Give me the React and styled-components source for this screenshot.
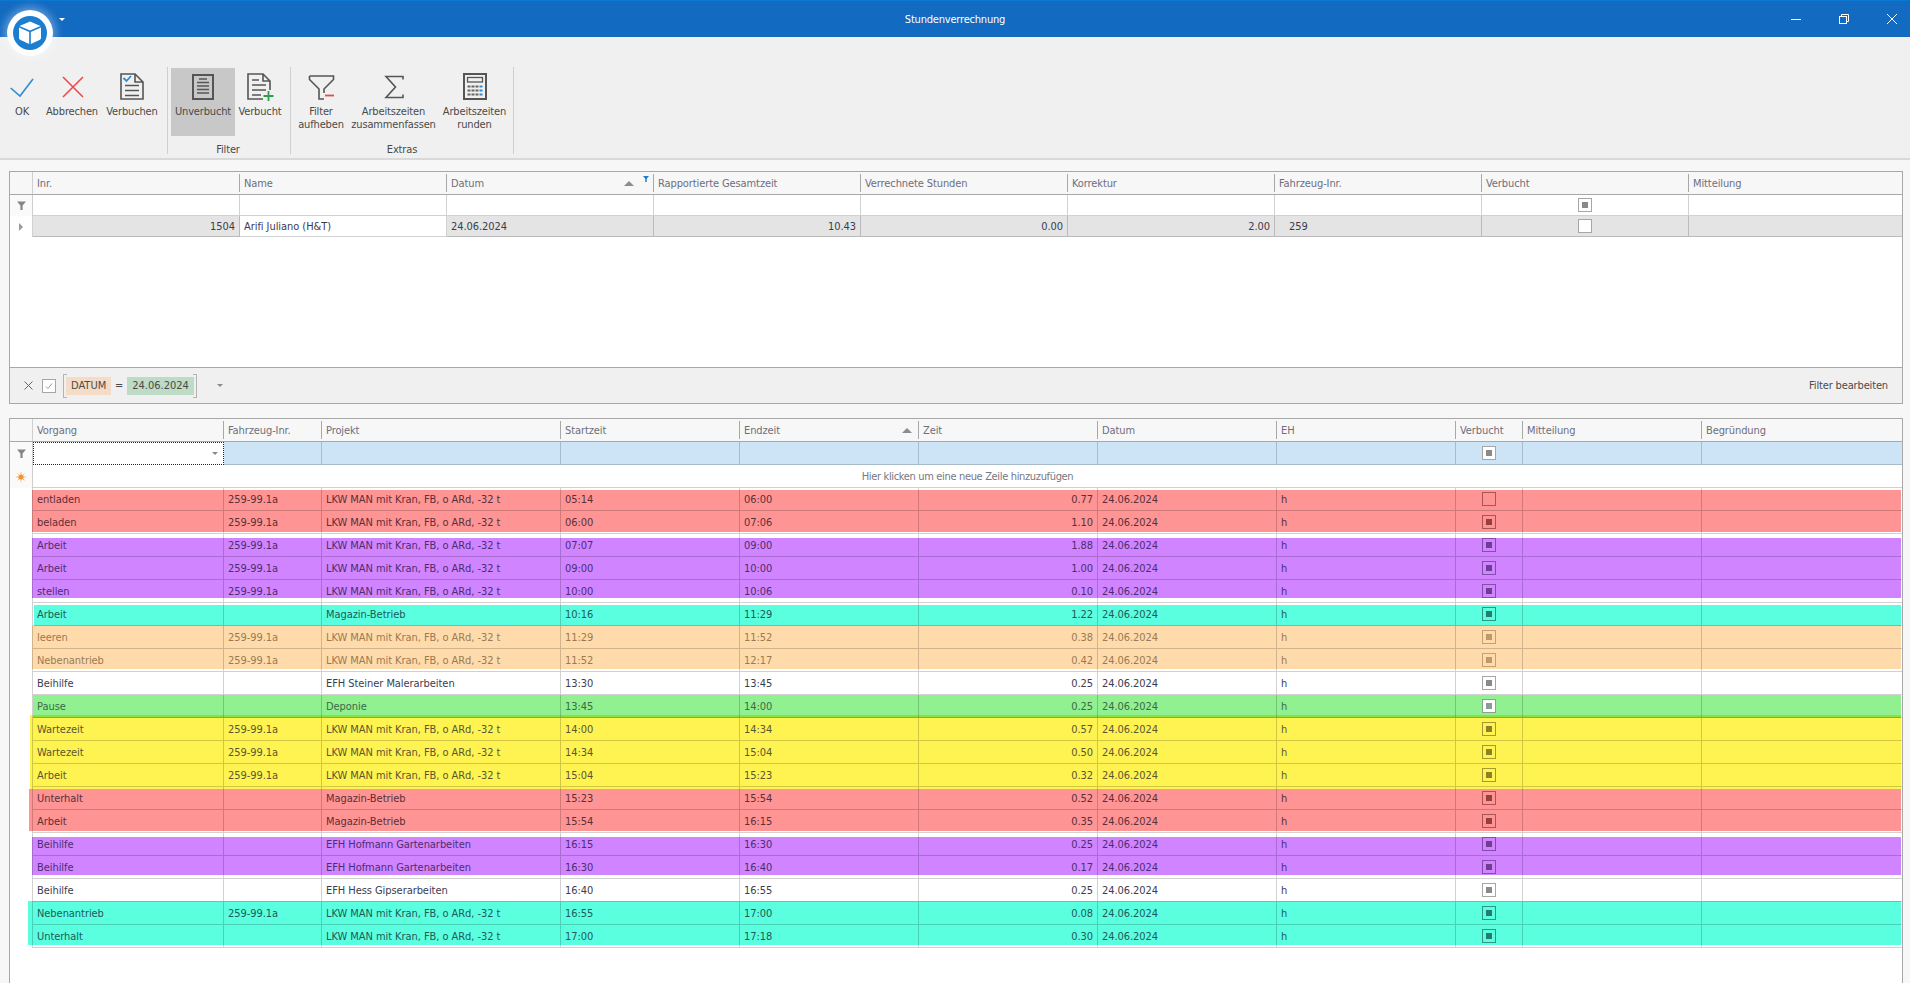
import styled, { createGlobalStyle } from 'styled-components';

const UI_FONT = `"DejaVu Sans Condensed", "DejaVu Sans", "Noto Sans", sans-serif`;
const TOP_COLS = '23px repeat(8, 207px) 1fr';
const LOW_COLS = '23px 191px 98px 239px repeat(5, 179px) 67px 179px 1fr';

const Global = createGlobalStyle`
    html, body {
        margin: 0;
        height: 100%;
        overflow: hidden;
    }
    body {
        background: #f7f7f7;
        font-family: ${UI_FONT};
        font-size: 11px;
        font-stretch: condensed;
        letter-spacing: -0.06px;
    }
`;

const Page = styled.div`
    display: flex;
    flex-direction: column;
    height: 100vh;
    position: relative;
`;

const TitleBar = styled.header`
    display: grid;
    grid-template-columns: 1fr auto 1fr;
    align-items: center;
    height: 37px;
    box-sizing: border-box;
    flex: none;
    background: #126ac1;
    border-top: 1px solid #0a78d2;
    color: #fff;
`;

const Title = styled.div`
    font-size: 11px;
    letter-spacing: -0.2px;
    grid-column: 2;
`;

const WindowButtons = styled.div`
    grid-column: 3;
    display: flex;
    justify-content: flex-end;
    gap: 20px;
    padding-right: 4px;
`;

const WindowButton = styled.span`
    display: flex;
    justify-content: center;
    width: 28px;
`;

const LogoBadge = styled.div`
    position: absolute;
    left: 7px;
    top: 10px;
    width: 46px;
    height: 46px;
    border-radius: 50%;
    box-shadow: 0 0 8px 3px rgba(255, 255, 255, 0.35);
`;

const QuickArrow = styled.div`
    position: absolute;
    left: 59px;
    top: 18px;
    border: 3px solid transparent;
    border-top: 3px solid #fff;
`;

const Ribbon = styled.section`
    display: flex;
    flex: none;
    height: 123px;
    box-sizing: border-box;
    padding: 30px 0 0 6px;
    background: #f0f0f0;
    border-bottom: 2px solid #d9d9d9;
    color: #4a4a4a;
    letter-spacing: -0.15px;
`;

const RibbonGroup = styled.div`
    display: flex;
    flex-direction: column;
    height: 87px;
    box-sizing: border-box;
    padding: 1px ${p => p.$right}px 0 ${p => p.$left}px;
    border-right: 1px solid #cfcfcf;
`;

const RibbonButtons = styled.div`
    display: flex;
`;

const RibbonButton = styled.div`
    display: flex;
    flex-direction: column;
    align-items: center;
    width: ${p => p.$width}px;
    height: 68px;
    padding-top: 3px;
    box-sizing: border-box;
    text-align: center;
    line-height: 13px;
    white-space: pre-line;
    background: ${p => (p.$active ? '#c8c8c8' : 'transparent')};
    svg {
        flex: none;
        margin-bottom: 2px;
    }
`;

const GroupLabel = styled.div`
    margin-top: 7px;
    line-height: 14px;
    height: 14px;
    text-align: center;
`;

const Frame = styled.section`
    display: flex;
    flex-direction: column;
    margin: ${p => p.$top}px 7px 0 9px;
    background: #fff;
    border: 1px solid #a8a8a8;
    box-sizing: border-box;
    ${p => (p.$height ? `height: ${p.$height}px; flex: none;` : 'flex: 1; border-bottom: none; overflow: hidden;')}
`;

const GridRow = styled.div`
    display: grid;
    flex: none;
    grid-template-columns: ${p => p.$cols};
    height: ${p => p.$height || 23}px;
    color: ${p => p.$color || '#3c3c50'};
    background: ${p => p.$background || 'transparent'};
`;

const HeaderRow = styled(GridRow)`
    background: #f7f7f7;
    border-bottom: 1px solid #a8a8a8;
    box-sizing: border-box;
`;

const HeaderCell = styled.div`
    display: flex;
    align-items: center;
    gap: ${p => p.$gap || 0}px;
    min-width: 0;
    margin: 2px 0;
    padding: 0 ${p => p.$padRight || 0}px 0 4px;
    color: #6e6e7c;
    letter-spacing: -0.1px;
    border-right: 1px solid #a8a8a8;
    &:first-child {
        border-right-color: #cfcfcf;
        margin: 0;
    }
    &:last-child {
        border-right: none;
    }
`;

const HeaderLabel = styled.span`
    flex: 1;
`;

const SortArrow = styled.i`
    flex: none;
    width: 0;
    height: 0;
    border: 5px solid transparent;
    border-top: none;
    border-bottom: 5px solid #8c8c8c;
`;

const FilteredMark = styled.svg`
    flex: none;
    align-self: flex-start;
    margin-top: 2px;
`;

const Cell = styled.div`
    display: flex;
    align-items: center;
    justify-content: ${p => p.$justify || 'flex-start'};
    min-width: 0;
    padding: 0 4px 0 ${p => p.$indent || 4}px;
    white-space: nowrap;
    box-sizing: border-box;
    background: ${p => p.$background || 'transparent'};
    border-right: 1px solid rgba(0, 0, 0, 0.18);
    border-bottom: 1px solid rgba(0, 0, 0, 0.18);
    &:last-child {
        border-right: none;
    }
`;

const IndicatorCell = styled.div`
    display: flex;
    align-items: center;
    justify-content: center;
    background: ${p => p.$background || 'transparent'};
    border-right: 1px solid rgba(0, 0, 0, 0.18);
`;

const Caret = styled.i`
    width: 0;
    height: 0;
    border: 4px solid transparent;
    border-left: 4px solid #9a9a9a;
    border-right: none;
`;

const Check = styled.span`
    display: flex;
    align-items: center;
    justify-content: center;
    width: 14px;
    height: 14px;
    box-sizing: border-box;
    border: 1px solid ${p => p.$line || '#a6a6a6'};
    background: ${p => p.$fill || 'transparent'};
    &::after {
        content: '';
        display: ${p => (p.$off ? 'none' : 'block')};
        width: 6px;
        height: 6px;
        background: ${p => p.$mark || '#8a8a8a'};
    }
`;

const GridBody = styled.div`
    flex: 1;
`;

const FilterPanel = styled.div`
    display: flex;
    align-items: center;
    flex: none;
    height: 36px;
    box-sizing: border-box;
    padding: 0 14px;
    color: #4a4a4a;
    background: #f0f0f0;
    border-top: 1px solid #a8a8a8;
    letter-spacing: -0.15px;
`;

const PanelCheck = styled.span`
    display: flex;
    width: 14px;
    height: 14px;
    margin-left: 9px;
    box-sizing: border-box;
    background: #fff;
    border: 1px solid #a6a6a6;
`;

// the [ ] around the filter expression: side borders plus four short ticks
const tick = '#b4b4b4';
const Expression = styled.div`
    display: flex;
    align-items: center;
    height: 24px;
    margin-left: 7px;
    padding: 0 2px;
    border-left: 1px solid ${tick};
    border-right: 1px solid ${tick};
    background:
        linear-gradient(${tick}, ${tick}) left top / 3px 1px no-repeat,
        linear-gradient(${tick}, ${tick}) left bottom / 3px 1px no-repeat,
        linear-gradient(${tick}, ${tick}) right top / 3px 1px no-repeat,
        linear-gradient(${tick}, ${tick}) right bottom / 3px 1px no-repeat;
`;

const Chip = styled.span`
    display: flex;
    align-items: center;
    height: 18px;
    padding: 0 5px;
    letter-spacing: 0;
    background: ${p => p.$color};
`;

const Equals = styled.span`
    width: 16px;
    text-align: center;
`;

const DropArrow = styled.i`
    width: 0;
    height: 0;
    margin-left: ${p => p.$gap || 0}px;
    border: 3px solid transparent;
    border-bottom: none;
    border-top: 3px solid #8a8a8a;
`;

const EditFilter = styled.span`
    margin-left: auto;
`;

const EditorCell = styled.div`
    display: flex;
    align-items: center;
    justify-content: flex-end;
    padding-right: 5px;
    box-sizing: border-box;
    background: #fff;
    border: 1px dotted #222;
`;

const NewRow = styled.div`
    display: grid;
    flex: none;
    grid-template-columns: 23px 1fr;
    height: 23px;
`;

const NewRowText = styled.div`
    display: flex;
    align-items: center;
    justify-content: center;
    color: #77777f;
    letter-spacing: -0.34px;
    border-bottom: 1px solid #d1d1d1;
`;

const FunnelMark = () => (
    <svg width="11" height="11" viewBox="0 0 11 11">
        <path d="M1 1.5h9L6.6 5.5V10H4.4V5.5z" fill="#858585" />
    </svg>
);

const SunMark = () => (
    <svg width="10" height="10" viewBox="0 0 13 13">
        <g stroke="#f7ac68" strokeWidth="1">
            <path d="M6.5 0v13M0 6.5h13M2 2l9 9M11 2l-9 9" />
        </g>
        <circle cx="6.5" cy="6.5" r="3.4" fill="#f4933c" />
    </svg>
);

const AppLogo = () => (
    <svg width="46" height="46" viewBox="0 0 46 46">
        <circle cx="23" cy="23" r="23" fill="#fff" />
        <circle cx="23" cy="23" r="17" fill="#1b7ed0" />
        <path d="M23 11.5 33.5 16 23 20.5 12.5 16z" fill="#fff" />
        <path d="M12 17.5 22.2 22v12L13.5 30c-1-.5-1.5-1.2-1.5-2.2z" fill="#fff" />
        <path d="M34 17.5 23.8 22v12L32.5 30c1-.5 1.5-1.2 1.5-2.2z" fill="#fff" />
    </svg>
);

const Minimize = () => (
    <svg width="10" height="10" viewBox="0 0 10 10">
        <path d="M0 5.5h10" stroke="#fff" />
    </svg>
);

const Restore = () => (
    <svg width="10" height="10" viewBox="0 0 10 10" fill="none" stroke="#fff">
        <rect x="0.5" y="2.5" width="7" height="7" />
        <path d="M2.5 2.5v-2h7v7h-2" />
    </svg>
);

const CloseMark = () => (
    <svg width="10" height="10" viewBox="0 0 10 10">
        <path d="M0 0l10 10M10 0L0 10" stroke="#fff" />
    </svg>
);

const Icon = ({ children }) => (
    <svg width="32" height="32" viewBox="0 0 32 32" fill="none" stroke="#555" strokeWidth="1.6">
        {children}
    </svg>
);

const OkIcon = () => (
    <Icon>
        <path d="M4.7 17 14 25 27 8" stroke="#2b8ed6" />
    </Icon>
);

const CancelIcon = () => (
    <Icon>
        <path d="M7 6l20 20M27 6 7 26" stroke="#ea4a4a" />
    </Icon>
);

const BookIcon = () => (
    <Icon>
        <path d="M5 3h14l8 8v17H5zM19 3v8h8" />
        <path d="M9 14.5h14M9 19.5h14M9 24.5h14" />
        <path d="M7.5 7l3 3L15 5" stroke="#2b8ed6" strokeWidth="1.8" />
    </Icon>
);

const OpenIcon = () => (
    <Icon>
        <rect x="6" y="4" width="20" height="24" strokeWidth="2" />
        <path d="M12 8h8M10 11.5h12M10 15h12M10 18.5h12M10 22h12" />
    </Icon>
);

const BookedIcon = () => (
    <Icon>
        <path d="M19 28H4V3h15l7 7v9M19 3v7h7" />
        <path d="M8 9h7M8 14h14M8 19h14M8 24h9" />
        <path d="M19.5 25h10M24.5 20v10" stroke="#2e9e4f" strokeWidth="1.8" />
    </Icon>
);

const ClearFilterIcon = () => (
    <Icon>
        <path d="M4.5 5h24v3.5L19 18v4M4.5 5v3.5L14 18v10h5" />
        <path d="M20 24.5h9" stroke="#ea4a4a" strokeWidth="1.8" />
    </Icon>
);

const SigmaIcon = () => (
    <Icon>
        <path d="M25 8.5V5.5H8l9.5 10.5L8 26.5h17v-3" />
    </Icon>
);

const CalcIcon = () => (
    <Icon>
        <rect x="5" y="3" width="22" height="25" strokeWidth="2" />
        <rect x="8.5" y="6.5" width="15" height="4.5" strokeWidth="1.3" />
        {[14.5, 18.5, 22.5].map(y =>
            [8.5, 12.5, 16.5, 20.5].map((x, i) => (
                <rect key={`${x}-${y}`} x={x} y={y} width="3" height="2" stroke="none" fill={i === 3 ? '#2b8ed6' : '#666'} />
            ))
        )}
    </Icon>
);

const RED = '#ff9494';
const PURPLE = '#d184ff';
const TEAL = '#5affe0';
const ORANGE = '#ffdbab';
const GREEN = '#91f08f';
const YELLOW = '#fff352';
const OVERLAP = '#8ee03c';

const LKW = 'LKW MAN mit Kran, FB, o ARd, -32 t';
const CAR = '259-99.1a';
const MAG = 'Magazin-Betrieb';
const HOF = 'EFH Hofmann Gartenarbeiten';

const INK = {
    red: { text: '#5a3038', line: 'rgba(90,20,20,.5)', mark: 'rgba(90,20,20,.65)' },
    purple: { text: '#4c2d70', line: 'rgba(60,20,90,.5)', mark: 'rgba(50,20,80,.62)' },
    teal: { text: '#1f5a58', line: 'rgba(20,80,70,.6)', mark: 'rgba(20,80,70,.75)' },
    orange: { text: '#9a7a52', line: 'rgba(120,90,50,.45)', mark: 'rgba(120,90,50,.5)' },
    white: { text: '#3c3c50', line: '#a6a6a6', mark: '#8a8a8a', fill: '#fff' },
    green: { text: '#3b6a4c', line: 'rgba(40,90,50,.55)', mark: 'rgba(60,90,80,.6)', fill: '#fff' },
    yellow: { text: '#5c5630', line: 'rgba(90,80,20,.55)', mark: 'rgba(90,80,20,.7)' },
};

// bands: [colour, x in row, y in row, height]; the painted stripes do not follow the row lines exactly
const rows = [
    ['entladen', CAR, LKW, '05:14', '06:00', '0.77', 'red', [[RED, 22, 2, 21]], true],
    ['beladen', CAR, LKW, '06:00', '07:06', '1.10', 'red', [[RED, 22, 0, 21]]],
    ['Arbeit', CAR, LKW, '07:07', '09:00', '1.88', 'purple', [[PURPLE, 22, 4, 19]]],
    ['Arbeit', CAR, LKW, '09:00', '10:00', '1.00', 'purple', [[PURPLE, 22, 0, 23]]],
    ['stellen', CAR, LKW, '10:00', '10:06', '0.10', 'purple', [[PURPLE, 22, 0, 18]]],
    ['Arbeit', '', MAG, '10:16', '11:29', '1.22', 'teal', [[TEAL, 24, 2, 21]]],
    ['leeren', CAR, LKW, '11:29', '11:52', '0.38', 'orange', [[ORANGE, 22, 0, 23]]],
    ['Nebenantrieb', CAR, LKW, '11:52', '12:17', '0.42', 'orange', [[ORANGE, 22, 0, 20]]],
    ['Beihilfe', '', 'EFH Steiner Malerarbeiten', '13:30', '13:45', '0.25', 'white', []],
    ['Pause', '', 'Deponie', '13:45', '14:00', '0.25', 'green', [[OVERLAP, 23, 20, 3], [YELLOW, 20, 20, 3], [GREEN, 23, 0, 20]]],
    ['Wartezeit', CAR, LKW, '14:00', '14:34', '0.57', 'yellow', [[YELLOW, 20, 0, 23]]],
    ['Wartezeit', CAR, LKW, '14:34', '15:04', '0.50', 'yellow', [[YELLOW, 20, 0, 23]]],
    ['Arbeit', CAR, LKW, '15:04', '15:23', '0.32', 'yellow', [[YELLOW, 20, 0, 23]]],
    ['Unterhalt', '', MAG, '15:23', '15:54', '0.52', 'red', [[YELLOW, 20, 0, 2], [RED, 19, 2, 21]]],
    ['Arbeit', '', MAG, '15:54', '16:15', '0.35', 'red', [[RED, 19, 0, 21]]],
    ['Beihilfe', '', HOF, '16:15', '16:30', '0.25', 'purple', [[PURPLE, 22, 4, 19]]],
    ['Beihilfe', '', HOF, '16:30', '16:40', '0.17', 'purple', [[PURPLE, 22, 0, 19]]],
    ['Beihilfe', '', 'EFH Hess Gipserarbeiten', '16:40', '16:55', '0.25', 'white', [[TEAL, 18, 22, 1]]],
    ['Nebenantrieb', CAR, LKW, '16:55', '17:00', '0.08', 'teal', [[TEAL, 18, 0, 23]]],
    ['Unterhalt', '', LKW, '17:00', '17:18', '0.30', 'teal', [[TEAL, 18, 0, 20]]],
];

const paintBands = bands =>
    bands.map(([c, x, y, h]) => `linear-gradient(${c}, ${c}) ${x}px ${y}px / calc(100% - ${x + 1}px) ${h}px no-repeat`).join(', ');

const WorkRow = ({ row }) => {
    const [task, car, project, start, end, hours, ink, bands, open] = row;
    const tone = INK[ink];
    return (
        <GridRow $cols={LOW_COLS} $color={tone.text} $background={bands.length ? paintBands(bands) : undefined}>
            <IndicatorCell />
            <Cell>{task}</Cell>
            <Cell>{car}</Cell>
            <Cell>{project}</Cell>
            <Cell>{start}</Cell>
            <Cell>{end}</Cell>
            <Cell $justify="flex-end">{hours}</Cell>
            <Cell>24.06.2024</Cell>
            <Cell>h</Cell>
            <Cell $justify="center">
                <Check $off={open} $line={tone.line} $mark={tone.mark} $fill={tone.fill} />
            </Cell>
            <Cell />
            <Cell />
        </GridRow>
    );
};

const App = () => (
    <Page>
        <Global />
        <TitleBar>
            <Title>Stundenverrechnung</Title>
            <WindowButtons>
                <WindowButton><Minimize /></WindowButton>
                <WindowButton><Restore /></WindowButton>
                <WindowButton><CloseMark /></WindowButton>
            </WindowButtons>
        </TitleBar>
        <LogoBadge><AppLogo /></LogoBadge>
        <QuickArrow />
        <Ribbon>
            <RibbonGroup $left={0} $right={9}>
                <RibbonButtons>
                    <RibbonButton $width={32}><OkIcon />OK</RibbonButton>
                    <RibbonButton $width={68}><CancelIcon />Abbrechen</RibbonButton>
                    <RibbonButton $width={52}><BookIcon />Verbuchen</RibbonButton>
                </RibbonButtons>
            </RibbonGroup>
            <RibbonGroup $left={3} $right={5}>
                <RibbonButtons>
                    <RibbonButton $width={64} $active><OpenIcon />Unverbucht</RibbonButton>
                    <RibbonButton $width={50}><BookedIcon />Verbucht</RibbonButton>
                </RibbonButtons>
                <GroupLabel>Filter</GroupLabel>
            </RibbonGroup>
            <RibbonGroup $left={2} $right={2}>
                <RibbonButtons>
                    <RibbonButton $width={56}><ClearFilterIcon />{'Filter\naufheben'}</RibbonButton>
                    <RibbonButton $width={89}><SigmaIcon />{'Arbeitszeiten\nzusammenfassen'}</RibbonButton>
                    <RibbonButton $width={73}><CalcIcon />{'Arbeitszeiten\nrunden'}</RibbonButton>
                </RibbonButtons>
                <GroupLabel>Extras</GroupLabel>
            </RibbonGroup>
        </Ribbon>

        <Frame $top={11} $height={233}>
            <HeaderRow $cols={TOP_COLS}>
                <HeaderCell />
                <HeaderCell>Inr.</HeaderCell>
                <HeaderCell>Name</HeaderCell>
                <HeaderCell $padRight={4} $gap={9}>
                    <HeaderLabel>Datum</HeaderLabel>
                    <SortArrow />
                    <FilteredMark width="6" height="6" viewBox="0 0 8 8"><path d="M0 0h8L5 3.5V8H3V3.5z" fill="#1b7ed0" /></FilteredMark>
                </HeaderCell>
                <HeaderCell>Rapportierte Gesamtzeit</HeaderCell>
                <HeaderCell>Verrechnete Stunden</HeaderCell>
                <HeaderCell>Korrektur</HeaderCell>
                <HeaderCell>Fahrzeug-Inr.</HeaderCell>
                <HeaderCell>Verbucht</HeaderCell>
                <HeaderCell>Mitteilung</HeaderCell>
            </HeaderRow>
            <GridRow $cols={TOP_COLS} $height={21}>
                <IndicatorCell $background="#fafafa"><FunnelMark /></IndicatorCell>
                <Cell /><Cell /><Cell /><Cell /><Cell /><Cell /><Cell />
                <Cell $justify="center"><Check $fill="#fff" /></Cell>
                <Cell />
            </GridRow>
            <GridRow $cols={TOP_COLS} $height={21}>
                <IndicatorCell><Caret /></IndicatorCell>
                <Cell $justify="flex-end" $background="#e4e4e4">1504</Cell>
                <Cell $background="#fff">Arifi Juliano (H&amp;T)</Cell>
                <Cell $background="#e4e4e4">24.06.2024</Cell>
                <Cell $justify="flex-end" $background="#e4e4e4">10.43</Cell>
                <Cell $justify="flex-end" $background="#e4e4e4">0.00</Cell>
                <Cell $justify="flex-end" $background="#e4e4e4">2.00</Cell>
                <Cell $indent={14} $background="#e4e4e4">259</Cell>
                <Cell $justify="center" $background="#e4e4e4"><Check $off $fill="#fff" /></Cell>
                <Cell $background="#e4e4e4" />
            </GridRow>
            <GridBody />
            <FilterPanel>
                <svg width="9" height="9" viewBox="0 0 9 9"><path d="M0.5 0.5l8 8M8.5 0.5l-8 8" stroke="#666" /></svg>
                <PanelCheck>
                    <svg width="12" height="12" viewBox="0 0 12 12" fill="none"><path d="M3 6.5 5 8.5 9 3.5" stroke="#999" /></svg>
                </PanelCheck>
                <Expression>
                    <Chip $color="#f5dcc6">DATUM</Chip>
                    <Equals>=</Equals>
                    <Chip $color="#bddbc5">24.06.2024</Chip>
                </Expression>
                <DropArrow $gap={20} />
                <EditFilter>Filter bearbeiten</EditFilter>
            </FilterPanel>
        </Frame>

        <Frame $top={14}>
            <HeaderRow $cols={LOW_COLS}>
                <HeaderCell />
                <HeaderCell>Vorgang</HeaderCell>
                <HeaderCell>Fahrzeug-Inr.</HeaderCell>
                <HeaderCell>Projekt</HeaderCell>
                <HeaderCell>Startzeit</HeaderCell>
                <HeaderCell $padRight={6}>
                    <HeaderLabel>Endzeit</HeaderLabel>
                    <SortArrow />
                </HeaderCell>
                <HeaderCell>Zeit</HeaderCell>
                <HeaderCell>Datum</HeaderCell>
                <HeaderCell>EH</HeaderCell>
                <HeaderCell>Verbucht</HeaderCell>
                <HeaderCell>Mitteilung</HeaderCell>
                <HeaderCell>Begründung</HeaderCell>
            </HeaderRow>
            <GridRow $cols={LOW_COLS} $background="#cde4f7">
                <IndicatorCell $background="#fafafa"><FunnelMark /></IndicatorCell>
                <EditorCell><DropArrow /></EditorCell>
                <Cell /><Cell /><Cell /><Cell /><Cell /><Cell /><Cell />
                <Cell $justify="center"><Check $fill="#fff" /></Cell>
                <Cell /><Cell />
            </GridRow>
            <NewRow>
                <IndicatorCell $background="#fafafa"><SunMark /></IndicatorCell>
                <NewRowText>Hier klicken um eine neue Zeile hinzuzufügen</NewRowText>
            </NewRow>
            {rows.map((row, i) => <WorkRow key={i} row={row} />)}
        </Frame>
    </Page>
);

export default App;
